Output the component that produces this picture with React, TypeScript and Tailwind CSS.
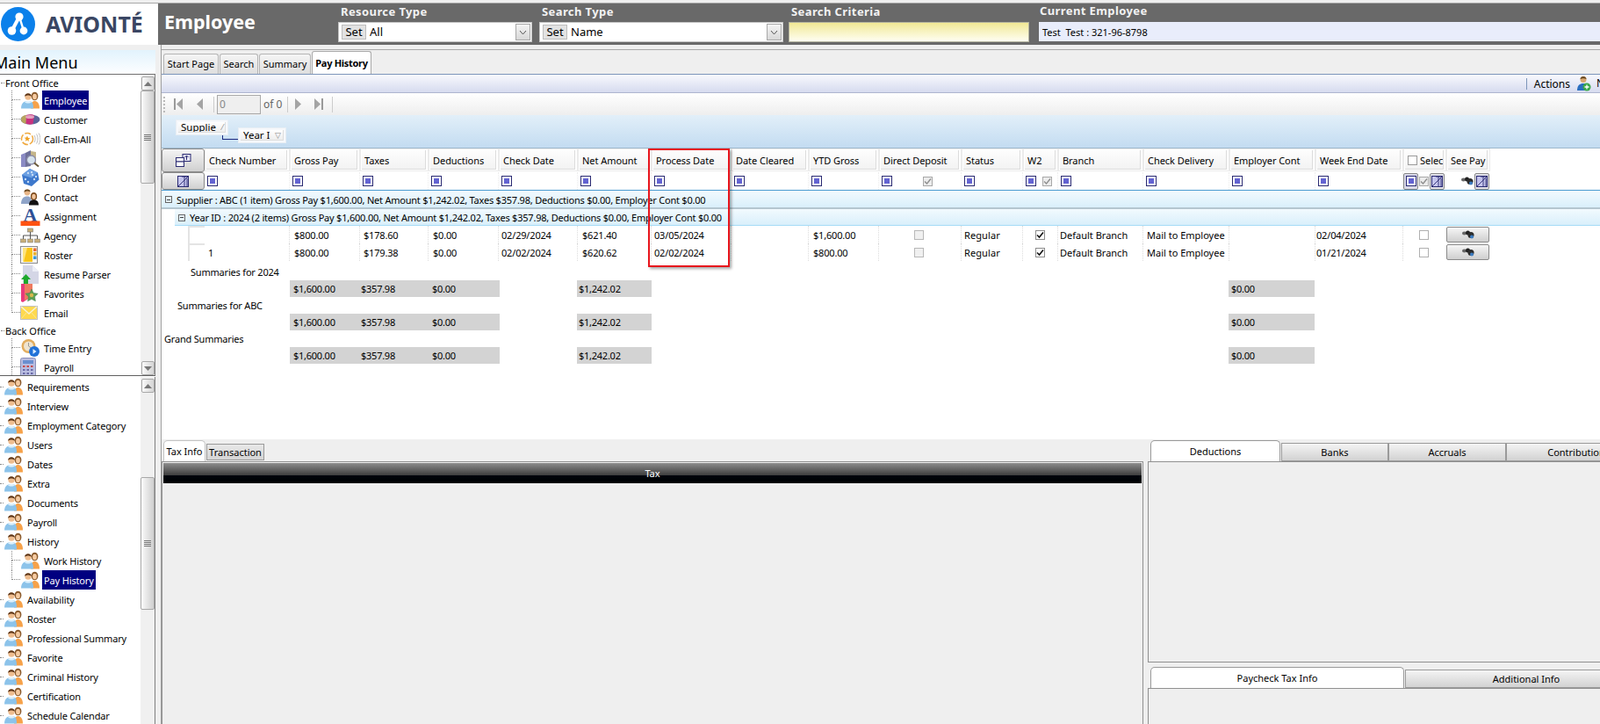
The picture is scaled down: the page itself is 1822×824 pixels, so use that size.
import React from "react";

const GRID = "grid grid-cols-[97px_80px_78px_80px_90px_84px_91px_88px_80px_94px_70px_40px_97px_98px_98px_100px_49px_50px]";

function People() {
  return (
    <svg width="23" height="20" viewBox="0 0 23 20">
      <ellipse cx="16.5" cy="5.5" rx="3.9" ry="4.8" fill="#8a5a2c" />
      <ellipse cx="16.5" cy="6" rx="2.4" ry="3.2" fill="#f6cba2" />
      <path d="M12 19.5C12 13 14 11 16.5 11S22 13 22 19.5Z" fill="#f6a24a" />
      <circle cx="9" cy="6.2" r="3.6" fill="#eebc8e" />
      <path d="M5.2 6C4.8 1 13.2 1 12.8 6 11 4 7 4 5.2 6Z" fill="#5c3416" />
      <path d="M1 19.5C1 13.5 4 11 9 11S15 13.5 15 19.5Z" fill="#8cc3ea" />
      <path d="M5 12C7 14 11 14 13 12 11 10.8 7 10.8 5 12Z" fill="#dff1fc" />
    </svg>
  );
}

function Customer() {
  return (
    <svg width="23" height="16" viewBox="0 0 23 16">
      <ellipse cx="11.5" cy="8" rx="11" ry="5.5" fill="#5b6399" />
      <path d="M1 8C1 5 4 3 8 2.8L7 12.8C4 12.5 1 11 1 8Z" fill="#b8a65c" />
      <path d="M7 3C10 1.8 15 2 16 3.5L14.5 13C12 14 8.5 13.8 6.5 12.6Z" fill="#c9327f" />
      <ellipse cx="11" cy="5" rx="5" ry="2" fill="#e5a3c0" />
    </svg>
  );
}

function CallEm() {
  return (
    <svg width="23" height="20" viewBox="0 0 23 20" fill="none">
      <circle cx="8" cy="10" r="6.5" stroke="#f0a83c" strokeWidth="1.5" strokeDasharray="7 2" />
      <path d="M8 6.5l1 2.4 2.4.2-1.9 1.6.6 2.4L8 11.4l-2.1 1.3.6-2.4-1.9-1.6 2.4-.2Z" fill="#f0a020" />
      <path d="M16 6c1.5 2.5 1.5 5.500 0 8M18.500 4.500c2 3.500 2 7.500 0 11M21 3.500c2.500 4 2.500 9 0 13" stroke="#bcbcbc" strokeWidth="1" />
    </svg>
  );
}

function OrderIcon() {
  return (
    <svg width="23" height="21" viewBox="0 0 23 21">
      <path d="M1 6l5-2v16H1Z" fill="#8b8bc4" />
      <path d="M6 4l6-3v18l-6 1Z" fill="#6e7099" />
      <path d="M12 2l6 1v13h-6Z" fill="#c5b68a" />
      <circle cx="12.500" cy="12" r="5" fill="#d6e3ee" stroke="#8c8ca8" strokeWidth="1.300" />
      <path d="M16 15.500l5 4" stroke="#6a5a3c" strokeWidth="2" />
    </svg>
  );
}

function Dice() {
  return (
    <svg width="23" height="22" viewBox="0 0 23 22">
      <path d="M11 1l9 4.500 1.500 8-8.500 7.500-9-3L2 8Z" fill="#3d78cc" />
      <path d="M2 8l9-7 9 4.500-7 6Z" fill="#6b9fe2" />
      <g fill="#c6dcf6">
        <circle cx="9" cy="6" r="1.200" /><circle cx="13" cy="5" r="1.200" /><circle cx="14" cy="8" r="1.200" />
        <circle cx="6" cy="13" r="1.200" /><circle cx="9" cy="16" r="1.200" /><circle cx="16" cy="13" r="1.200" /><circle cx="18" cy="10" r="1.200" />
      </g>
    </svg>
  );
}

function ContactIcon() {
  return (
    <svg width="23" height="20" viewBox="0 0 23 20">
      <circle cx="8" cy="5" r="3.400" fill="#e8b688" />
      <path d="M4.500 5C4 .5 12 .5 11.500 4.500 9.500 3 6.500 3 4.500 5Z" fill="#6a4a22" />
      <path d="M1 18C1 12 4 9.500 8 9.500S13 12 13 18Z" fill="#8fa4c8" />
      <ellipse cx="15.500" cy="9.500" rx="3.600" ry="4.500" fill="#7c4a1c" />
      <ellipse cx="15.500" cy="9.800" rx="2.200" ry="3" fill="#f2c49a" />
      <path d="M10 19.500C10 15 12.500 13.500 15.500 13.500S21 15 21 19.500Z" fill="#111" />
    </svg>
  );
}

function AssignIcon() {
  return (
    <svg width="23" height="23" viewBox="0 0 23 23">
      <text x="11.500" y="17" textAnchor="middle" fontFamily="'Liberation Serif',serif" fontWeight="bold" fontSize="22" fill="#2d4f96">A</text>
      <rect x="0.500" y="16.500" width="22" height="5.500" fill="#ff5212" />
    </svg>
  );
}

function AgencyIcon() {
  return (
    <svg width="23" height="19" viewBox="0 0 23 19" fill="none">
      <rect x="8.500" y="1" width="6" height="4" fill="#c8ae78" stroke="#666" strokeWidth="0.500" />
      <path d="M11.500 5v4M3.500 13V9h16v4M11.500 9v4" stroke="#555" />
      <rect x="0.500" y="13" width="6" height="4" fill="#c8ae78" stroke="#777" strokeWidth="0.500" />
      <rect x="8.500" y="13" width="6" height="4" fill="#c8ae78" stroke="#777" strokeWidth="0.500" />
      <rect x="16.500" y="13" width="6" height="4" fill="#c8ae78" stroke="#777" strokeWidth="0.500" />
    </svg>
  );
}

function RosterIcon() {
  return (
    <svg width="21" height="21" viewBox="0 0 21 21">
      <rect x="0.500" y="0.500" width="19" height="19" fill="#f4f4f4" stroke="#8c8c8c" />
      <rect x="3" y="2" width="11" height="16" fill="#f8c518" />
      <path d="M3 2h5L4 18H3Z" fill="#fde37c" />
      <rect x="15" y="2.500" width="3.500" height="3.500" fill="#e86a30" />
      <rect x="15" y="7" width="3.500" height="3.500" fill="#e8b030" />
      <rect x="15" y="11.500" width="3.500" height="3.500" fill="#3c98d8" />
    </svg>
  );
}

function ResumeIcon() {
  return (
    <svg width="22" height="23" viewBox="0 0 22 23">
      <path d="M3 1h11l7 7v14H3Z" fill="#d4d6e6" />
      <path d="M14 1l7 7h-7Z" fill="#eceef6" />
      <path d="M6.500 11l5.500 6H9v5H4v-5H1Z" fill="#1ea82c" />
    </svg>
  );
}

function FavIcon() {
  return (
    <svg width="23" height="22" viewBox="0 0 23 22">
      <path d="M1 0h13v14L3 21l-2-1Z" fill="#e83a7c" />
      <path d="M5 0h9v14l-9 5Z" fill="#ef7a60" />
      <path d="M13 6l2.200 4.500 5 .7-3.600 3.500.8 5-4.400-2.300-4.400 2.300.8-5L6 11.200l5-.7Z" fill="#5fa050" stroke="#3b7f58" strokeWidth="0.500" />
      <circle cx="13" cy="13" r="2.200" fill="#d8b84e" />
    </svg>
  );
}

function MailIcon() {
  return (
    <svg width="20" height="16" viewBox="0 0 20 16">
      <rect x="0.500" y="0.500" width="19" height="15" fill="#ffd94e" stroke="#c0c0c0" />
      <path d="M1 1l9 8 9-8" fill="none" stroke="#f6f2d8" strokeWidth="1.500" />
      <path d="M1 15l6.500-7.500M19 15l-6.500-7.500" stroke="#f6e79a" strokeWidth="1" />
    </svg>
  );
}

function TimeIcon() {
  return (
    <svg width="23" height="23" viewBox="0 0 23 23">
      <circle cx="9.500" cy="9" r="8" fill="#e2ad5e" />
      <circle cx="9.500" cy="9" r="5.500" fill="#efe4cf" />
      <path d="M9.500 5v4l3 2" stroke="#999" fill="none" />
      <circle cx="16" cy="15" r="6" fill="#2172d8" />
      <path d="M14.500 12l4 3-4 3Z" fill="#ddeeff" />
    </svg>
  );
}

function CalcIcon() {
  return (
    <svg width="18" height="22" viewBox="0 0 18 22">
      <rect x="0.500" y="0.500" width="17" height="24" rx="2" fill="#b9bde0" stroke="#8c90b8" />
      <rect x="3" y="3" width="12" height="4" fill="#6a8fd0" />
      <g fill="#c84a4a"><rect x="3" y="9" width="2.500" height="2" /><rect x="7.500" y="9" width="2.500" height="2" /><rect x="12" y="9" width="2.500" height="2" /></g>
      <g fill="#6a6aa8"><rect x="3" y="13" width="2.500" height="2" /><rect x="7.500" y="13" width="2.500" height="2" /><rect x="12" y="13" width="2.500" height="2" /><rect x="3" y="17" width="2.500" height="2" /><rect x="7.500" y="17" width="2.500" height="2" /><rect x="12" y="17" width="2.500" height="2" /></g>
    </svg>
  );
}

function Grip() {
  return (
    <div className="flex flex-col gap-[1px] w-[8px] mx-auto">
      <div className="h-[1px] bg-[#777]" /><div className="h-[1px] bg-[#777]" /><div className="h-[1px] bg-[#777]" /><div className="h-[1px] bg-[#777]" />
    </div>
  );
}

function ScrollBtn({ dir }: { dir: "up" | "down" }) {
  return (
    <div className="h-[16px] shrink-0 mx-[0.5px] rounded-[2px] border border-[#a8a8a8] bg-gradient-to-r from-[#fafafa] to-[#d4d4d4] flex items-center justify-center">
      <svg width="9" height="5" viewBox="0 0 9 5"><path d={dir === "up" ? "M4.500 0L9 5H0Z" : "M4.500 5L9 0H0Z"} fill="#777" /></svg>
    </div>
  );
}

function Thumb({ h }: { h: string }) {
  return (
    <div className={`${h} shrink-0 rounded-[2px] border border-[#a8a8a8] bg-gradient-to-r from-[#fafafa] to-[#cfcfcf] flex items-center`}>
      <Grip />
    </div>
  );
}

function TreeChild({ icon, label, selected, last }: { icon: React.ReactNode; label: string; selected?: boolean; last?: boolean }) {
  return (
    <div className="flex h-[22px] items-stretch shrink-0 pl-[13px]">
      <div className="w-[10px] flex flex-col shrink-0">
        <div className="h-[11px] border-l border-b border-dotted border-[#888]" />
        <div className={`h-[11px] ${last ? "" : "border-l border-dotted border-[#888]"}`} />
      </div>
      <div className="w-[25px] shrink-0 flex items-center">{icon}</div>
      <div className={`px-[2px] flex items-center whitespace-nowrap tracking-[-0.15px] ${selected ? "bg-[#000080] text-white" : "text-black"}`}>{label}</div>
    </div>
  );
}

function TreeRoot({ label }: { label: string }) {
  return (
    <div className="flex h-[22px] items-center shrink-0">
      <div className="w-[4px] border-b border-dotted border-[#888] shrink-0" />
      <div className="w-[25px] shrink-0 flex items-center"><People /></div>
      <div className="px-[2px] whitespace-nowrap tracking-[-0.15px] text-black">{label}</div>
    </div>
  );
}

function Section({ label }: { label: string }) {
  return (
    <div className="flex h-[18px] items-center shrink-0 pl-[1px]">
      <div className="w-[4px] border-b border-dotted border-[#888] mr-[1px]" />
      <div className="text-black whitespace-nowrap">{label}</div>
    </div>
  );
}

function Sidebar() {
  return (
    <aside className="w-[184px] shrink-0 border-r border-[#a0a0a0] bg-[#efefef] flex flex-col overflow-hidden">
      <div className="h-[6px] shrink-0" />
      <div className="w-[177px] h-[27px] shrink-0 bg-gradient-to-b from-[#e2f3fd] to-[#fdfeff] flex items-center overflow-hidden">
        <span className="-ml-[7px] text-[18px] text-black whitespace-nowrap leading-none">Main Menu</span>
      </div>
      <div className="w-[177px] flex flex-col flex-1 min-h-0">
        <div className="h-[1px] bg-[#707070] shrink-0" />
        <div className="h-[342px] flex shrink-0 bg-white border-r border-[#808080]">
          <div className="flex-1 flex flex-col overflow-hidden">
            <Section label="Front Office" />
            <TreeChild icon={<People />} label="Employee" selected />
            <TreeChild icon={<Customer />} label="Customer" />
            <TreeChild icon={<CallEm />} label="Call-Em-All" />
            <TreeChild icon={<OrderIcon />} label="Order" />
            <TreeChild icon={<Dice />} label="DH Order" />
            <TreeChild icon={<ContactIcon />} label="Contact" />
            <TreeChild icon={<AssignIcon />} label="Assignment" />
            <TreeChild icon={<AgencyIcon />} label="Agency" />
            <TreeChild icon={<RosterIcon />} label="Roster" />
            <TreeChild icon={<ResumeIcon />} label="Resume Parser" />
            <TreeChild icon={<FavIcon />} label="Favorites" />
            <TreeChild icon={<MailIcon />} label="Email" last />
            <Section label="Back Office" />
            <TreeChild icon={<TimeIcon />} label="Time Entry" />
            <TreeChild icon={<CalcIcon />} label="Payroll" />
          </div>
          <div className="w-[16px] shrink-0 flex flex-col bg-[#f0f0f0] pt-[2px]">
            <ScrollBtn dir="up" />
            <Thumb h="h-[106px]" />
            <div className="flex-1" />
            <ScrollBtn dir="down" />
          </div>
        </div>
        <div className="h-[1px] bg-[#606060] shrink-0" />
        <div className="h-[1px] bg-white shrink-0" />
        <div className="flex-1 min-h-0 flex bg-white border-r border-[#808080]">
          <div className="flex-1 flex flex-col overflow-hidden">
            <TreeRoot label="Requirements" />
            <TreeRoot label="Interview" />
            <TreeRoot label="Employment Category" />
            <TreeRoot label="Users" />
            <TreeRoot label="Dates" />
            <TreeRoot label="Extra" />
            <TreeRoot label="Documents" />
            <TreeRoot label="Payroll" />
            <TreeRoot label="History" />
            <TreeChild icon={<People />} label="Work History" />
            <TreeChild icon={<People />} label="Pay History" selected last />
            <TreeRoot label="Availability" />
            <TreeRoot label="Roster" />
            <TreeRoot label="Professional Summary" />
            <TreeRoot label="Favorite" />
            <TreeRoot label="Criminal History" />
            <TreeRoot label="Certification" />
            <TreeRoot label="Schedule Calendar" />
          </div>
          <div className="w-[16px] shrink-0 flex flex-col bg-[#f0f0f0] pt-[2px]">
            <ScrollBtn dir="up" />
            <div className="h-[96px] shrink-0" />
            <Thumb h="h-[151px]" />
          </div>
        </div>
      </div>
    </aside>
  );
}

function Combo({ value, className }: { value: string; className: string }) {
  return (
    <div className={`${className} h-[23px] bg-white border border-[#c4c4c4] flex items-center pl-[3px] pr-[1px] text-[13px] text-black`}>
      <span className="h-[17px] w-[28px] flex items-center justify-center bg-[#e2e2e2] border border-[#bdbdbd] shrink-0">Set</span>
      <span className="ml-[4px] flex-1">{value}</span>
      <span className="w-[17px] h-[19px] bg-gradient-to-b from-[#f4f4f4] to-[#d8d8d8] border border-[#a8a8a8] flex items-center justify-center">
        <svg width="9" height="6" viewBox="0 0 9 6" fill="none"><path d="M1 1l3.500 4L8 1" stroke="#555" /></svg>
      </span>
    </div>
  );
}

function Field({ label, className, children }: { label: string; className: string; children: React.ReactNode }) {
  return (
    <div className={`${className} shrink-0 flex flex-col`}>
      <div className="h-[21px] flex items-center pb-[3px] pl-[3px] text-[13px] font-bold tracking-[0.4px] text-[#f2f2f2] whitespace-nowrap leading-none">{label}</div>
      {children}
    </div>
  );
}

function Header() {
  return (
    <header className="h-[47px] shrink-0 bg-[#696969] flex">
      <div className="w-[180px] shrink-0 bg-white flex items-center pl-[1px]">
        <svg width="39" height="39" viewBox="0 0 39 39" className="shrink-0">
          <circle cx="19.500" cy="19.500" r="19.500" fill="#0b80ea" />
          <path d="M21 11L12.500 27" stroke="#fff" strokeWidth="4" />
          <path d="M21 11L26 27" stroke="#fff" strokeWidth="2.500" />
          <circle cx="21" cy="11" r="4.600" fill="#fff" />
          <circle cx="12.500" cy="27" r="4.800" fill="#fff" />
          <circle cx="26" cy="27" r="4.400" fill="#fff" />
        </svg>
        <span className="ml-[12px] font-['Lato','Noto_Sans',sans-serif] font-bold text-[25px] leading-none text-[#3a4663] whitespace-nowrap">AVIONTÉ</span>
      </div>
      <div className="w-[205px] shrink-0 pl-[7px] flex items-center text-[21.5px] font-bold text-white leading-none pb-[5px]">Employee</div>
      <Field label="Resource Type" className="w-[229px]">
        <Combo value="All" className="w-[221px]" />
      </Field>
      <Field label="Search Type" className="w-[284px]">
        <Combo value="Name" className="w-[278px]" />
      </Field>
      <Field label="Search Criteria" className="w-[285px]">
        <div className="w-[274px] h-[23px] border border-[#b4b4a0] bg-gradient-to-b from-[#f1e893] to-[#fffef2]" />
      </Field>
      <div className="flex-1 flex flex-col">
        <div className="h-[21px] pb-[5px] pl-[1px] flex items-center text-[13px] font-bold tracking-[0.4px] text-[#f2f2f2] leading-none">Current Employee</div>
        <div className="h-[22px] bg-[#e9edfb] flex items-center pl-[4px] text-black whitespace-pre">Test  Test : 321-96-8798</div>
      </div>
    </header>
  );
}

function MainTab({ label, w, active }: { label: string; w: string; active?: boolean }) {
  return (
    <div className={`${w} shrink-0 flex items-center justify-center pb-[1px] rounded-t-[3px] border border-b-0 whitespace-nowrap ${active ? "h-[26px] border-[#a9a9a9] bg-white font-bold tracking-[-0.3px] text-black" : "h-[23px] mt-[2px] border-[#b5b5b5] bg-gradient-to-b from-[#f5f5f5] to-[#dedede] text-black"}`}>
      {label}
    </div>
  );
}

function Tri({ dir, bar }: { dir: "l" | "r"; bar?: boolean }) {
  return (
    <svg width="11" height="13" viewBox="0 0 11 13">
      {dir === "l" ? (
        <g>
          {bar ? <rect x="0" y="0" width="2" height="13" fill="#9a9a9a" /> : null}
          <path d="M10 0v13L3 6.500Z" fill="#a4a4a4" />
        </g>
      ) : (
        <g>
          <path d="M1 0v13l7-6.500Z" fill="#a4a4a4" />
          {bar ? <rect x="9" y="0" width="2" height="13" fill="#9a9a9a" /> : null}
        </g>
      )}
    </svg>
  );
}

function Pager() {
  return (
    <div className="h-[25px] shrink-0 bg-gradient-to-b from-white to-[#eeeeee] flex items-center pl-[2px]">
      <div className="w-[2px] h-[18px] border-l-2 border-dotted border-[#bbb]" />
      <div className="ml-[10px]"><Tri dir="l" bar /></div>
      <div className="ml-[12px]"><Tri dir="l" /></div>
      <div className="ml-[11px] w-[1px] h-[18px] bg-[#ccc]" />
      <div className="ml-[3px] w-[50px] h-[22px] border border-[#a8a8a8] bg-[#efefef] text-[#888] text-[12px] pl-[2px] flex items-center">0</div>
      <div className="ml-[3px] text-[#666] text-[12px] whitespace-nowrap">of 0</div>
      <div className="ml-[6px] w-[1px] h-[18px] bg-[#ccc]" />
      <div className="ml-[7px]"><Tri dir="r" /></div>
      <div className="ml-[11px]"><Tri dir="r" bar /></div>
      <div className="ml-[10px] w-[1px] h-[18px] bg-[#ccc]" />
    </div>
  );
}

function Chip({ label, icon, w }: { label: string; icon: string; w: string }) {
  return (
    <div className={`${w} h-[18px] shrink-0 bg-[#f6f8fb] border border-[#e8eef4] p-[2px]`}>
      <div className="h-full bg-gradient-to-b from-white to-[#eeeeee] border-r border-b border-[#ddd] flex items-center justify-between pl-[3px] pr-[2px] overflow-hidden text-[11.5px] text-black">
        <span>{label}</span>
        <span className="text-[#888] text-[9px]">{icon}</span>
      </div>
    </div>
  );
}

function GroupBand() {
  return (
    <div className="h-[38px] shrink-0 bg-gradient-to-b from-[#e2eff9] to-[#c3dcf1] border-b border-[#9eb8cc] flex items-start pl-[16px] pt-[5px]">
      <Chip label="Supplie" icon="⁄" w="w-[60px]" />
      <div className="w-[18px] h-[5px] mt-[18px] -ml-[7px] border-l border-b border-[#1a2a80] shrink-0" />
      <div className="mt-[9px]"><Chip label="Year I" icon="▽" w="w-[55px]" /></div>
    </div>
  );
}

function FilterBox() {
  return (
    <span className="inline-flex w-[12px] h-[12px] border border-[#2a2a72] p-[2px] bg-white shrink-0">
      <span className="block w-full h-full bg-[#6363d2]" />
    </span>
  );
}

function FilterClear() {
  return (
    <svg width="13" height="13" viewBox="0 0 13 13" className="shrink-0">
      <rect x="0.500" y="0.500" width="12" height="12" fill="#c4c4ec" stroke="#2a2a72" />
      <path d="M1 12L12 1H5M8 1v11M11 3v9" fill="none" stroke="#2a2a72" strokeWidth="0.900" />
    </svg>
  );
}

function DisabledCheck() {
  return (
    <span className="inline-flex w-[11px] h-[11px] border border-[#a8a8a8] bg-[#ececec] items-center justify-center shrink-0">
      <svg width="9" height="9" viewBox="0 0 9 9" fill="none"><path d="M1 4.500l2.500 2.500L8 1.500" stroke="#8c8c8c" strokeWidth="1.300" /></svg>
    </span>
  );
}

function Binoculars() {
  return (
    <svg width="14" height="10" viewBox="0 0 14 10">
      <ellipse cx="2.500" cy="3.500" rx="2.500" ry="2" fill="#666" />
      <ellipse cx="6.500" cy="3" rx="2.500" ry="2.500" fill="#222" />
      <ellipse cx="10" cy="5.500" rx="3.500" ry="3.500" fill="#2c2c2c" />
      <ellipse cx="11" cy="7.500" rx="2" ry="2" fill="#3b7cc2" />
    </svg>
  );
}

const heads = ["Check Number", "Gross Pay", "Taxes", "Deductions", "Check Date", "Net Amount", "Process Date", "Date Cleared", "YTD Gross", "Direct Deposit", "Status", "W2", "Branch", "Check Delivery", "Employer Cont", "Week End Date"];

function HeaderCell({ children }: { children: React.ReactNode }) {
  return (
    <div className="h-[26px] border border-[#ebebeb] p-[1px] pr-[2px]">
      <div className="h-full bg-gradient-to-b from-[#fdfdfd] to-[#f3f3f3] border-r border-b border-[#dcdcdc] flex items-center pl-[3px] pt-[1px] overflow-hidden whitespace-nowrap tracking-[-0.05px] text-black">{children}</div>
    </div>
  );
}

function CornerBtn({ h, children }: { h: string; children: React.ReactNode }) {
  return (
    <div className={`${h} bg-gradient-to-b from-[#f4f4f4] to-[#d0d0d0] border border-[#8a8a8a] rounded-[3px] flex items-center justify-center`}>{children}</div>
  );
}

function ColumnHeader() {
  return (
    <div className="flex shrink-0 bg-white">
      <div className="w-[49px] shrink-0">
        <CornerBtn h="h-[27px]">
          <svg width="18" height="15" viewBox="0 0 18 15" fill="none">
            <rect x="8" y="0.500" width="9" height="8" fill="#e8e8f4" stroke="#2a2a72" />
            <rect x="0.500" y="4.500" width="9" height="4.500" fill="#fff" stroke="#2a2a72" />
            <rect x="0.500" y="9" width="9" height="5.500" fill="#fff" stroke="#2a2a72" />
            <path d="M12.500 7V2.500M10.500 4l2-2 2 2" stroke="#2a2a72" />
          </svg>
        </CornerBtn>
      </div>
      <div className={GRID}>
        {heads.map((h) => (
          <HeaderCell key={h}>{h}</HeaderCell>
        ))}
        <HeaderCell>
          <span className="w-[11px] h-[11px] border border-[#9a9a9a] bg-white mr-[3px] shrink-0" />
          Selec
        </HeaderCell>
        <HeaderCell>See Pay</HeaderCell>
      </div>
    </div>
  );
}

function FilterRow() {
  return (
    <div className="flex shrink-0 h-[20px] bg-white">
      <div className="w-[49px] shrink-0">
        <CornerBtn h="h-[20px]">
          <FilterClear />
        </CornerBtn>
      </div>
      <div className={GRID}>
        {heads.map((h) => (
          <div key={h} className="flex items-center pl-[3px] pr-[4px] justify-between border-r border-dotted border-[#ececec]">
            <FilterBox />
            {h === "Direct Deposit" ? <span className="mr-[28px]"><DisabledCheck /></span> : null}
            {h === "W2" ? <span className="mr-[2px]"><DisabledCheck /></span> : null}
          </div>
        ))}
        <div className="flex items-center justify-between pr-[2px]">
          <span className="w-[17px] h-[19px] rounded-[2px] border border-[#888] bg-[#d8d8e8] flex items-center justify-center"><FilterBox /></span>
          <DisabledCheck />
          <span className="w-[17px] h-[19px] rounded-[2px] border border-[#888] bg-[#e0e0e8] flex items-center justify-center"><FilterClear /></span>
        </div>
        <div className="flex items-center justify-end gap-[1px] pr-[1px]">
          <Binoculars />
          <span className="w-[17px] h-[19px] rounded-[2px] border border-[#888] bg-[#e0e0e8] flex items-center justify-center"><FilterClear /></span>
        </div>
      </div>
    </div>
  );
}

function GroupRow({ text, indent }: { text: string; indent: string }) {
  return (
    <div className={`h-[19px] shrink-0 ${indent} bg-gradient-to-b from-[#f2fafe] to-[#d9effb] flex items-center pt-[1px] whitespace-nowrap tracking-[-0.22px] text-black`}>
      <span className="w-[8px] h-[8px] ml-[4px] mr-[5px] border border-[#666] flex items-center justify-center shrink-0">
        <span className="block w-[4px] h-[1px] bg-[#444]" />
      </span>
      {text}
    </div>
  );
}

type RowData = { num: string; tax: string; date: string; net: string; proc: string; ytd: string; end: string };

function Cell({ children, pl = "pl-[3px]" }: { children?: React.ReactNode; pl?: string }) {
  return <div className={`${pl} flex items-center border-r border-dotted border-[#dcdcdc] whitespace-nowrap text-black overflow-hidden`}>{children}</div>;
}

function DataRow({ r }: { r: RowData }) {
  return (
    <div className="flex h-[20px] shrink-0 bg-white tracking-[-0.18px]">
      <div className="w-[30px] shrink-0" />
      <div className="w-[19px] shrink-0 border-l-2 border-t-2 border-[#e4e4e4]" />
      <div className={GRID}>
        <Cell pl="pl-[4px]">{r.num}</Cell>
        <Cell pl="pl-[5px]">$800.00</Cell>
        <Cell pl="pl-[4px]">{r.tax}</Cell>
        <Cell pl="pl-[5px]">$0.00</Cell>
        <Cell>{r.date}</Cell>
        <Cell pl="pl-[5px]">{r.net}</Cell>
        <Cell>{r.proc}</Cell>
        <Cell />
        <Cell pl="pl-[5px]">{r.ytd}</Cell>
        <div className="flex items-center justify-center pr-[2px] border-r border-dotted border-[#dcdcdc]">
          <span className="w-[11px] h-[11px] border border-[#b8b8b8] bg-[#f0f0f0]" />
        </div>
        <Cell><span className="tracking-[0.1px]">Regular</span></Cell>
        <div className="flex items-center justify-center border-r border-dotted border-[#dcdcdc]">
          <span className="w-[11px] h-[11px] border border-[#8c8c8c] bg-white flex items-center justify-center">
            <svg width="9" height="9" viewBox="0 0 9 9" fill="none"><path d="M1 4.500l2.500 2.500L8 1.500" stroke="#111" strokeWidth="1.600" /></svg>
          </span>
        </div>
        <Cell pl="pl-[2px]"><span className="tracking-normal">Default Branch</span></Cell>
        <Cell pl="pl-[4px]"><span className="tracking-normal">Mail to Employee</span></Cell>
        <Cell />
        <Cell pl="pl-[1px]">{r.end}</Cell>
        <div className="flex items-center justify-center pr-[2px]">
          <span className="w-[11px] h-[11px] border border-[#b0b0b0] bg-white" />
        </div>
        <div className="flex items-center pr-[1px]">
          <span className="w-full h-[18px] rounded-[2px] border border-[#8a8a8a] bg-gradient-to-b from-[#f6f6f6] to-[#cfcfcf] flex items-center justify-center"><Binoculars /></span>
        </div>
      </div>
    </div>
  );
}

function SummaryValues() {
  return (
    <div className="flex h-[19px] shrink-0 pl-[146px] text-black tracking-[-0.25px]">
      <div className="w-[239px] bg-[#d3d3d3] grid grid-cols-[81px_81px_77px] items-center">
        <span className="pl-[4px]">$1,600.00</span>
        <span>$357.98</span>
        <span>$0.00</span>
      </div>
      <div className="w-[88px] shrink-0" />
      <div className="w-[85px] bg-[#d3d3d3] flex items-center pl-[2px]">$1,242.02</div>
      <div className="w-[657px] shrink-0" />
      <div className="w-[98px] bg-[#d3d3d3] flex items-center pl-[3px]">$0.00</div>
    </div>
  );
}

function Grid() {
  return (
    <div className="flex-1 min-h-0 bg-white flex flex-col overflow-hidden">
      <ColumnHeader />
      <FilterRow />
      <div className="h-[1px] bg-[#4a9bd0] shrink-0" />
      <GroupRow text="Supplier : ABC (1 item) Gross Pay $1,600.00, Net Amount $1,242.02, Taxes $357.98, Deductions $0.00, Employer Cont $0.00" indent="" />
      <div className="h-[2px] bg-[#b4c6d0] shrink-0" />
      <GroupRow text="Year ID : 2024 (2 items) Gross Pay $1,600.00, Net Amount $1,242.02, Taxes $357.98, Deductions $0.00, Employer Cont $0.00" indent="ml-[15px] border-b border-[#a5dcf7]" />
      <DataRow r={{ num: "", tax: "$178.60", date: "02/29/2024", net: "$621.40", proc: "03/05/2024", ytd: "$1,600.00", end: "02/04/2024" }} />
      <DataRow r={{ num: "1", tax: "$179.38", date: "02/02/2024", net: "$620.62", proc: "02/02/2024", ytd: "$800.00", end: "01/21/2024" }} />
      <div className="h-[20px] mt-[2px] pl-[33px] flex items-center shrink-0 tracking-[-0.2px] text-black">Summaries for 2024</div>
      <SummaryValues />
      <div className="h-[19px] pl-[18px] flex items-center shrink-0 tracking-[-0.2px] text-black">Summaries for ABC</div>
      <SummaryValues />
      <div className="h-[19px] pl-[3px] flex items-center shrink-0 tracking-[-0.2px] text-black">Grand Summaries</div>
      <SummaryValues />
    </div>
  );
}

function LowTab({ label, w, active }: { label: string; w: string; active?: boolean }) {
  return (
    <div className={`${w} shrink-0 flex items-center justify-center whitespace-nowrap text-black ${active ? "h-[24px] mt-[1px] rounded-t-[5px] border border-b-0 border-[#9a9a9a] bg-white" : "h-[21px] mt-[4px] border border-[#9a9a9a] bg-gradient-to-b from-[#f4f4f4] to-[#d2d2d2]"}`}>
      {label}
    </div>
  );
}

function Bottom() {
  return (
    <div className="h-[324px] shrink-0 bg-[#efefef] flex">
      <div className="w-[1120px] shrink-0 flex flex-col pt-[1px]">
        <div className="flex h-[24px] shrink-0 pl-[2px] gap-[1px] pb-[1px]">
          <div className="w-[48px] h-[24px] rounded-t-[5px] border border-b-0 border-[#c4c4c4] bg-white flex items-center justify-center text-black">Tax Info</div>
          <div className="w-[66px] h-[19px] mt-[4px] border border-[#9a9a9a] bg-gradient-to-b from-[#e8e8e8] to-[#d4d4d4] flex items-center justify-center text-black">Transaction</div>
        </div>
        <div className="flex-1 w-[1118px] border border-b-0 border-[#909090] p-[1px]">
          <div className="h-[23px] bg-[linear-gradient(to_bottom,#8d8d8d_0%,#3c3c3c_62%,#00050c_63%,#000_100%)] flex items-center justify-center text-white">Tax</div>
        </div>
      </div>
      <div className="flex-1 min-w-0 flex flex-col pl-[3px] overflow-hidden">
        <div className="flex h-[25px] shrink-0 pl-[3px]">
          <LowTab label="Deductions" w="w-[148px]" active />
          <LowTab label="Banks" w="w-[122px] ml-[1px]" />
          <LowTab label="Accruals" w="w-[134px]" />
          <LowTab label="Contribution" w="w-[160px]" />
        </div>
        <div className="h-[229px] shrink-0 border border-r-0 border-[#909090]" />
        <div className="flex h-[25px] mt-[4px] shrink-0 pl-[3px]">
          <LowTab label="Paycheck Tax Info" w="w-[289px]" active />
          <LowTab label="Additional Info" w="w-[276px] ml-[1px]" />
        </div>
        <div className="flex-1 border border-r-0 border-b-0 border-[#909090]" />
      </div>
    </div>
  );
}

function Main() {
  return (
    <main className="flex-1 min-w-0 flex flex-col bg-[#efefef] overflow-hidden">
      <div className="h-[5px] shrink-0" />
      <div className="h-[1px] shrink-0 bg-[#a8a8a8]" />
      <div className="h-[27px] shrink-0 flex items-end pl-[2px] gap-[1px]">
        <MainTab label="Start Page" w="w-[63px]" />
        <MainTab label="Search" w="w-[44px]" />
        <MainTab label="Summary" w="w-[59px]" />
        <MainTab label="Pay History" w="w-[68px]" active />
      </div>
      <div className="h-[1px] shrink-0 bg-[#7c95ba]" />
      <div className="h-[21px] shrink-0 bg-gradient-to-b from-[#f8f9fd] to-[#d6dbef] border-b border-[#aeb5cf] flex items-center justify-end text-black overflow-hidden whitespace-nowrap">
        <div className="w-[1px] h-[13px] bg-[#7c95ba] mr-[8px]" />
        <span className="text-[12px] pt-[1px]">Actions</span>
        <svg width="17" height="18" viewBox="0 0 17 18" className="ml-[7px]">
          <circle cx="8" cy="4.500" r="3.500" fill="#d9a870" />
          <path d="M4.500 4C4.500 0 11.500 0 11.500 4 9.500 3 6.500 3 4.500 4Z" fill="#6a4a22" />
          <path d="M1 17C1 11 4 9 8 9S15 11 15 17Z" fill="#2a6fc0" />
          <circle cx="12" cy="13" r="4.500" fill="#3ba84a" />
          <path d="M12 10.500v5M9.500 13h5" stroke="#fff" strokeWidth="1.300" />
        </svg>
        <span className="ml-[6px] w-[4px] overflow-hidden text-[12px]">New</span>
      </div>
      <Pager />
      <GroupBand />
      <Grid />
      <Bottom />
    </main>
  );
}

export default function App() {
  return (
    <div className="relative w-[1822px] h-[824px] overflow-hidden flex flex-col bg-white font-['Noto_Sans','DejaVu_Sans',sans-serif] text-[11px] leading-none text-black">
      <div className="h-[3px] shrink-0 bg-[#efefef]" />
      <div className="h-[1px] shrink-0 bg-[#a8a8a8]" />
      <Header />
      <div className="flex flex-1 min-h-0">
        <Sidebar />
        <Main />
      </div>
      <div className="absolute left-[738px] top-[169px] w-[93px] h-[135px] border-2 border-[#e8141c] shadow-[2px_2px_3px_rgba(0,0,0,0.35)] pointer-events-none" />
    </div>
  );
}
